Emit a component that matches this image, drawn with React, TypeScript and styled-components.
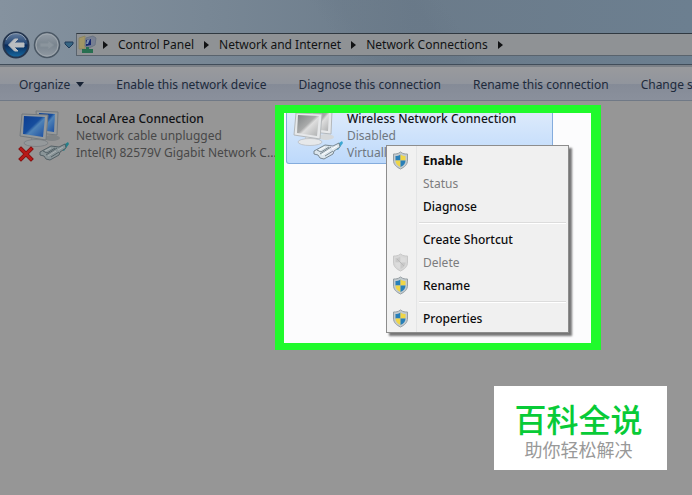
import React from "react";
import styled, { createGlobalStyle, css } from "styled-components";

const GlobalStyle = createGlobalStyle`
  * { box-sizing: border-box; }
  html, body, #root { height: 100%; }
  body {
    margin: 0;
    overflow: hidden;
    font-family: "Noto Sans", "Open Sans", "Noto Sans CJK SC", sans-serif;
    font-size: 12px;
    line-height: 17px;
    color: #111214;
    background: #969696;
  }
  button {
    font: inherit;
    color: inherit;
    background: none;
    border: 0;
    padding: 0;
    margin: 0;
    white-space: nowrap;
  }
`;

const Window = styled.div`
  position: relative;
  display: flex;
  flex-direction: column;
  min-height: 100%;
  overflow: hidden;
`;

const TitleArea = styled.header`
  padding-top: 33px;
  padding-bottom: 8px;
  border-bottom: 1px solid #414d5a;
  background:
    linear-gradient(55deg, transparent 48%, #64748433 52%, #64748444 62%, transparent 66%),
    linear-gradient(90deg, #85929f 0%, #788795 30%, #6b7b8a 60%, #6c7f90 100%);
`;

const NavRow = styled.div`
  display: flex;
  align-items: center;
  height: 23px;
`;

const NavButtons = styled.div`
  display: flex;
  align-items: center;
  width: 76px;
  flex: none;
  padding-left: 2px;
`;

const NavButton = styled.button`
  display: flex;
  margin: -3px 3px -3px 0;
`;

const AddressBar = styled.nav`
  display: flex;
  align-items: center;
  flex: 1;
  height: 23px;
  padding-left: 1px;
  background: #8f9295;
  border: 1px solid #59636d;
  border-top-color: #303941;
  border-right: 0;
`;

const CrumbList = styled.div`
  display: flex;
  align-items: center;
  gap: 10px;
  padding-left: 6px;
`;

const CrumbArrow = styled.span`
  border-left: 5px solid #111214;
  border-top: 4px solid transparent;
  border-bottom: 4px solid transparent;
`;

const Toolbar = styled.div`
  display: flex;
  align-items: center;
  height: 36px;
  padding-left: 19px;
  padding-top: 2px;
  gap: 32px;
  overflow: hidden;
  color: #202a3b;
  border-top: 2px solid #7b8087;
  border-bottom: 1px solid #707986;
  background: linear-gradient(#999a9d, #91959d 50%, #858b97 52%, #8a909c);
`;

const Organize = styled.button`
  display: flex;
  align-items: center;
  gap: 6px;
`;

const DownArrow = styled.span`
  border-top: 5px solid #182335;
  border-left: 4px solid transparent;
  border-right: 4px solid transparent;
`;

const Content = styled.main`
  display: flex;
  align-items: flex-start;
  flex: 1;
  padding-top: 4px;
`;

const selectedTile = css`
  width: 267px;
  height: 51px;
  margin-left: 2px;
  padding: 0 0 0 5px;
  overflow: hidden;
  border: 1px solid #84acdd;
  border-top: 0;
  border-radius: 0 0 3px 3px;
  color: #16181b;
  background: linear-gradient(#dceafb, #bdd9fb);

  > svg { margin-top: -4px; }
`;

const Tile = styled.section<{ $selected?: boolean }>`
  display: flex;
  width: 275px;
  flex: none;
  padding: 5px 0 0 18px;
  ${(p) => p.$selected && selectedTile}
`;

const TileText = styled.div<{ $raised?: boolean }>`
  flex: 1;
  min-width: 0;
  margin-top: ${(p) => (p.$raised ? "-3px" : "0")};
  padding-left: ${(p) => (p.$raised ? "0" : "3px")};
`;

const TileName = styled.div`
  font-weight: 500;
  white-space: nowrap;
`;

const TileDetail = styled.div<{ $color: string }>`
  color: ${(p) => p.$color};
  white-space: nowrap;
`;

const Highlight = styled.div`
  position: relative;
  width: 326px;
  min-height: 245px;
  flex: none;
  border: solid #20fa2c;
  border-width: 8px 10px 7px 9px;
  background: #fcfcfd;
`;

const Menu = styled.ul`
  position: absolute;
  left: 102px;
  top: 32px;
  width: 183px;
  margin: 0;
  padding: 3px 2px 2px;
  list-style: none;
  color: #0c0c0d;
  border: 1px solid #8d8d8d;
  background: linear-gradient(90deg, #f1f1f1 29px, #e4e5e6 29px, #e4e5e6 30px, #f0f0f0 30px);
  box-shadow: 3px 3px 2px #00000088;
`;

const MenuItem = styled.button<{ $bold?: boolean }>`
  display: flex;
  align-items: center;
  width: 100%;
  height: 23px;
  padding-left: 3px;
  font-weight: ${(p) => (p.$bold ? 700 : 500)};
  &:disabled { color: #7c7c7e; font-weight: 400; }
`;

const MenuIcon = styled.span`
  display: flex;
  width: 31px;
`;

const Separator = styled.li`
  height: 2px;
  margin: 4px 0 4px 30px;
  border-top: 1px solid #dcdcdc;
  border-bottom: 1px solid #fff;
`;

const Watermark = styled.aside`
  position: absolute;
  right: 25px;
  bottom: 25px;
  width: 173px;
  height: 84px;
  padding: 14px 4px 0 0;
  text-align: center;
  font-family: "Noto Sans CJK SC", sans-serif;
  background: #fff;
`;

const Brand = styled.div`
  font-size: 32px;
  line-height: 37px;
  font-weight: 500;
  color: #08cb37;
`;

const Slogan = styled.div`
  font-size: 18px;
  line-height: 25px;
  color: #999;
`;

function BackIcon() {
  return (
    <svg width="28" height="28" viewBox="0 0 28 28" aria-hidden="true">
      <defs>
        <linearGradient id="back" x2="0" y2="1">
          <stop offset="0" stopColor="#687f9f" />
          <stop offset=".45" stopColor="#244775" />
          <stop offset=".5" stopColor="#092a5a" />
          <stop offset="1" stopColor="#176ba3" />
        </linearGradient>
      </defs>
      <circle cx="14" cy="14" r="12.5" fill="url(#back)" stroke="#25364f" strokeWidth="2" />
      <path d="M4 9a11 11 0 0 1 20 0" fill="none" stroke="#8c9bae" />
      <path d="m6.500 14 6-6H16l-4 4h10v4H12l4 4h-3.500z" fill="#babdc0" stroke="#babdc0" />
    </svg>
  );
}

function ForwardIcon() {
  return (
    <svg width="28" height="28" viewBox="0 0 28 28" aria-hidden="true">
      <defs>
        <linearGradient id="forward" x2="0" y2="1">
          <stop offset="0" stopColor="#949da6" />
          <stop offset=".5" stopColor="#7a858f" />
          <stop offset="1" stopColor="#929ba4" />
        </linearGradient>
      </defs>
      <circle cx="14" cy="14" r="12.5" fill="url(#forward)" stroke="#4b5865" strokeWidth="1.5" />
      <circle cx="14" cy="14" r="11" fill="none" stroke="#9fa7ae" />
      <path d="m21 14-6-5v3H7v4h8v3z" fill="#8b959d" stroke="#818c95" />
    </svg>
  );
}

function HistoryIcon() {
  return (
    <svg width="10" height="8" viewBox="0 0 10 8" aria-hidden="true">
      <path d="M1 1h8v2L5 7 1 3z" fill="#376684" stroke="#203b59" />
    </svg>
  );
}

function LocationIcon() {
  return (
    <svg width="19" height="19" viewBox="0 0 19 19" aria-hidden="true">
      <path d="M1 3 7 1v13H1z" fill="#a29665" stroke="#8c8664" />
      <path d="m8 3 7-2 3 2-1 7-6 3-4-2z" fill="#777f92" stroke="#6a7484" />
      <path d="m8 5 5-1v6l-5 1z" fill="#17286f" />
      <path d="m9 5 3-1-2 5H8z" fill="#8091ac" />
      <path d="M8 12v2H4v4h11v-4h-4v-2z" fill="#286f51" />
    </svg>
  );
}

function AdapterIcon({ off = false }: { off?: boolean }) {
  const id = off ? "screen-off" : "screen-on";
  const frame = off ? "#e6e8ea" : "#95999b";
  const edge = off ? "#b4b8bb" : "#747a7e";
  const cable = off ? "#6f7e87" : "#4d5a60";
  return (
    <svg width="55" height="52" viewBox="0 0 55 52" aria-hidden="true">
      <defs>
        <linearGradient id={id} x2="1" y2="1">
          <stop offset="0" stopColor={off ? "#808486" : "#0c3d91"} />
          <stop offset=".45" stopColor={off ? "#a9aaaa" : "#164d9d"} />
          <stop offset=".55" stopColor={off ? "#dedede" : "#4f83b7"} />
          <stop offset="1" stopColor={off ? "#aeb0b1" : "#1a4da0"} />
        </linearGradient>
      </defs>
      <ellipse cx="34" cy="28" rx="8" ry="3" fill={off ? "#d5d8da" : "#808486"} />
      <path d="m18 1 22 1-1 23-19-2z" fill={frame} stroke={edge} />
      <path d="m21 3 16 1-1 18-14-2z" fill={`url(#${id})`} />
      <path d="m14 27 9 1-1 5H13z" fill={frame} stroke={edge} strokeWidth=".6" />
      <ellipse cx="18" cy="33" rx="12" ry="3.500" fill={frame} stroke={edge} strokeWidth=".7" />
      <path d="m4 4 26 1-2 25L2 26z" fill={frame} stroke={edge} />
      <path d="m6 6 21 1-2 20-20-3z" fill={`url(#${id})`} />
      <path d="m41 38 9-6 1 2-5 7z" fill={off ? "#3da8d3" : "#23808a"} />
      <path d="m22 42 11-6 8 1 6-3 1 4-6 4-1 3-9 5-4-1-2-3-4-1z" fill={off ? "#dce6ed" : "#8a9598"} stroke={cable} strokeWidth=".9" />
      <path d="m28 45 11-7m-6 9 8-5M25 41l4 2 8-5" fill="none" stroke={cable} strokeWidth=".9" />
      <path d="m30 46 8-5m-11 0 6-3m7 2 5-3" stroke={off ? "#fff" : "#a9b0b2"} />
      {!off && (
        <g strokeLinecap="square">
          <path d="m3 39 10 10m0-10L3 49" stroke="#7d0e0e" strokeWidth="4" />
          <path d="m3 39 10 10m0-10L3 49" stroke="#b71a18" strokeWidth="2.500" />
        </g>
      )}
    </svg>
  );
}

function Shield({ faded = false }: { faded?: boolean }) {
  const blue = faded ? "#c9c9c9" : "#287fb8";
  const yellow = faded ? "#dcdcdc" : "#f0d646";
  return (
    <svg width="17" height="19" viewBox="0 0 17 19" aria-hidden="true">
      <path
        d="M8.500 1C6 3 4 3 1.500 3v6c0 5 3 7 7 9 4-2 7-4 7-9V3C13 3 11 3 8.500 1z"
        fill={faded ? "#d8d8d8" : "#c3cbd0"}
        stroke={faded ? "#c8c8c8" : "#969fa3"}
      />
      <path d="M8.500 3.500C7 4.500 5 5 3.500 5v4.500h5z" fill={blue} />
      <path d="M8.500 3.500C10 4.500 12 5 13.500 5v4.500h-5z" fill={yellow} />
      <path d="M3.500 9.500h5V16c-3.500-1.500-5-3.500-5-6.500z" fill={yellow} />
      <path d="M8.500 9.500h5c0 3-1.500 5-5 6.500z" fill={blue} />
      {faded && <path d="m5 6 7 7" stroke="#b9b9b9" />}
    </svg>
  );
}

const crumbs = ["Control Panel", "Network and Internet", "Network Connections"];
const actions = [
  "Enable this network device",
  "Diagnose this connection",
  "Rename this connection",
  "Change settings of this connection",
];

type Entry = { label: string; shield?: boolean; disabled?: boolean; bold?: boolean } | null;

const entries: Entry[] = [
  { label: "Enable", shield: true, bold: true },
  { label: "Status", disabled: true },
  { label: "Diagnose" },
  null,
  { label: "Create Shortcut" },
  { label: "Delete", shield: true, disabled: true },
  { label: "Rename", shield: true },
  null,
  { label: "Properties", shield: true },
];

export default function App() {
  return (
    <>
      <GlobalStyle />
      <Window>
        <TitleArea>
          <NavRow>
            <NavButtons>
              <NavButton aria-label="Back"><BackIcon /></NavButton>
              <NavButton aria-label="Forward"><ForwardIcon /></NavButton>
              <NavButton aria-label="Recent pages"><HistoryIcon /></NavButton>
            </NavButtons>
            <AddressBar aria-label="Address">
              <LocationIcon />
              <CrumbList>
                <CrumbArrow />
                {crumbs.map((name) => (
                  <React.Fragment key={name}>
                    <button>{name}</button>
                    <CrumbArrow />
                  </React.Fragment>
                ))}
              </CrumbList>
            </AddressBar>
          </NavRow>
        </TitleArea>
        <Toolbar role="toolbar">
          <Organize>Organize <DownArrow /></Organize>
          {actions.map((name) => (
            <button key={name}>{name}</button>
          ))}
        </Toolbar>
        <Content>
          <Tile>
            <AdapterIcon />
            <TileText>
              <TileName>Local Area Connection</TileName>
              <TileDetail $color="#484848">Network cable unplugged</TileDetail>
              <TileDetail $color="#484848">Intel(R) 82579V Gigabit Network C...</TileDetail>
            </TileText>
          </Tile>
          <Highlight>
            <Tile $selected>
              <AdapterIcon off />
              <TileText $raised>
                <TileName>Wireless Network Connection</TileName>
                <TileDetail $color="#6f7780">Disabled</TileDetail>
                <TileDetail $color="#6f7780">Virtuall</TileDetail>
              </TileText>
            </Tile>
            <Menu>
              {entries.map((entry, i) =>
                entry ? (
                  <li key={entry.label}>
                    <MenuItem disabled={entry.disabled} $bold={entry.bold}>
                      <MenuIcon>{entry.shield && <Shield faded={entry.disabled} />}</MenuIcon>
                      {entry.label}
                    </MenuItem>
                  </li>
                ) : (
                  <Separator key={i} role="separator" />
                ),
              )}
            </Menu>
          </Highlight>
        </Content>
        <Watermark>
          <Brand>百科全说</Brand>
          <Slogan>助你轻松解决</Slogan>
        </Watermark>
      </Window>
    </>
  );
}
